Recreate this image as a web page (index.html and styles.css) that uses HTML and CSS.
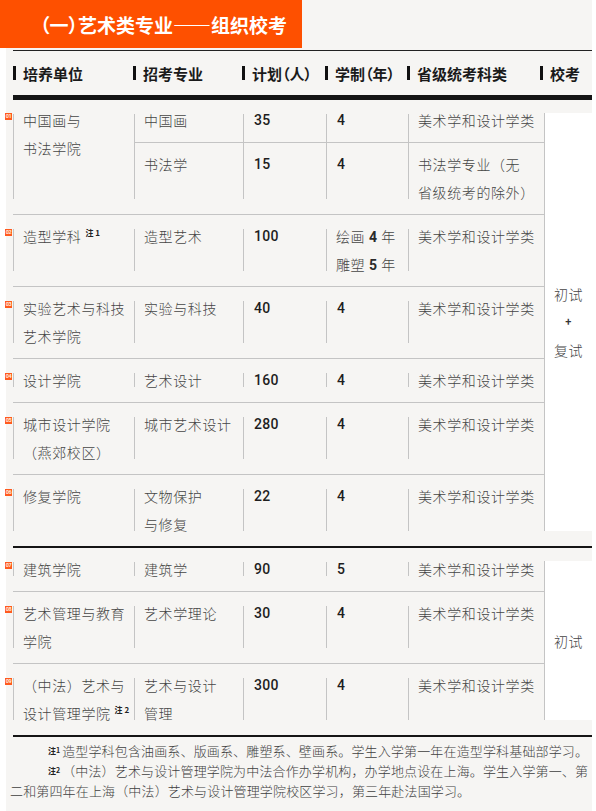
FILE: index.html
```html
<!DOCTYPE html>
<html lang="zh-CN">
<head>
<meta charset="utf-8">
<title>艺术类专业——组织校考</title>
<link rel="stylesheet" href="styles.css">
</head>
<body>
<div class="page">
  <div class="banner"><h1 class="title">（一）艺术类专业——组织校考</h1></div>
  <div class="content">
    <div class="thead">
      <div class="th">培养单位</div>
      <div class="th">招考专业</div>
      <div class="th">计划（人）</div>
      <div class="th">学制（年）</div>
      <div class="th">省级统考科类</div>
      <div class="th">校考</div>
    </div>

    <div class="group">
      <div class="rows">
        <div class="row row-split">
          <div class="cell unit"><span class="num">01</span>中国画与<br>书法学院</div>
          <div class="cell top">中国画</div>
          <div class="cell top n">35</div>
          <div class="cell top n">4</div>
          <div class="cell top">美术学和设计学类</div>
          <div class="cell bot">书法学</div>
          <div class="cell bot n">15</div>
          <div class="cell bot n">4</div>
          <div class="cell bot">书法学专业（无<br>省级统考的除外）</div>
        </div>
        <div class="row">
          <div class="cell unit"><span class="num">02</span>造型学科<sup class="mark">注 1</sup></div>
          <div class="cell">造型艺术</div>
          <div class="cell n">100</div>
          <div class="cell">绘画 <b class="d">4</b> 年<br>雕塑 <b class="d">5</b> 年</div>
          <div class="cell">美术学和设计学类</div>
        </div>
        <div class="row">
          <div class="cell unit"><span class="num">03</span>实验艺术与科技<br>艺术学院</div>
          <div class="cell">实验与科技</div>
          <div class="cell n">40</div>
          <div class="cell n">4</div>
          <div class="cell">美术学和设计学类</div>
        </div>
        <div class="row">
          <div class="cell unit"><span class="num">04</span>设计学院</div>
          <div class="cell">艺术设计</div>
          <div class="cell n">160</div>
          <div class="cell n">4</div>
          <div class="cell">美术学和设计学类</div>
        </div>
        <div class="row">
          <div class="cell unit"><span class="num">05</span>城市设计学院<br>（燕郊校区）</div>
          <div class="cell">城市艺术设计</div>
          <div class="cell n">280</div>
          <div class="cell n">4</div>
          <div class="cell">美术学和设计学类</div>
        </div>
        <div class="row">
          <div class="cell unit"><span class="num">06</span>修复学院</div>
          <div class="cell">文物保护<br>与修复</div>
          <div class="cell n">22</div>
          <div class="cell n">4</div>
          <div class="cell">美术学和设计学类</div>
        </div>
      </div>
      <div class="exam"><span>初试</span><span class="plus">+</span><span>复试</span></div>
    </div>

    <div class="group">
      <div class="rows">
        <div class="row">
          <div class="cell unit"><span class="num">07</span>建筑学院</div>
          <div class="cell">建筑学</div>
          <div class="cell n">90</div>
          <div class="cell n">5</div>
          <div class="cell">美术学和设计学类</div>
        </div>
        <div class="row">
          <div class="cell unit"><span class="num">08</span>艺术管理与教育<br>学院</div>
          <div class="cell">艺术学理论</div>
          <div class="cell n">30</div>
          <div class="cell n">4</div>
          <div class="cell">美术学和设计学类</div>
        </div>
        <div class="row">
          <div class="cell unit"><span class="num">09</span>（中法）艺术与<br>设计管理学院<sup class="mark">注 2</sup></div>
          <div class="cell">艺术与设计<br>管理</div>
          <div class="cell n">300</div>
          <div class="cell n">4</div>
          <div class="cell">美术学和设计学类</div>
        </div>
      </div>
      <div class="exam"><span>初试</span></div>
    </div>

    <div class="notes">
      <p class="note"><span class="fn">注<sup>1</sup></span>造型学科包含油画系、版画系、雕塑系、壁画系。学生入学第一年在造型学科基础部学习。</p>
      <p class="note"><span class="fn">注<sup>2</sup></span>（中法）艺术与设计管理学院为中法合作办学机构，办学地点设在上海。学生入学第一、第<br>二和第四年在上海（中法）艺术与设计管理学院校区学习，第三年赴法国学习。</p>
    </div>
  </div>
</div>
</body>
</html>
```
FILE: styles.css
```css
body {
  margin: 0;
  background: #ffffff;
  font-family: "Noto Sans CJK SC", "Noto Sans", sans-serif;
}

.page {
  margin-left: 6px;
  width: 586px;
  min-height: 811px;
  background: #f6f5f3;
}

.banner {
  margin-left: -6px;
  width: 302px;
  height: 48px;
  margin-bottom: 2px;
  background: #fe5000;
}

.title {
  margin: 0;
  padding: 1px 0 0 40px;
  font-size: 19px;
  line-height: 47px;
  font-weight: 700;
  color: #ffffff;
  font-feature-settings: "palt";
  white-space: nowrap;
}

.content {
  padding-left: 7px;
}

/* header */
.thead {
  display: grid;
  grid-template-columns: 120px 109px 83px 82px 133px 1fr;
  align-items: center;
  height: 44px;
  border-top: 1px solid #222222;
  border-bottom: 5px solid #151515;
}

.th {
  display: flex;
  align-items: center;
  gap: 7px;
  font-size: 15px;
  font-weight: 700;
  color: #1a1a1a;
  font-feature-settings: "palt";
  white-space: nowrap;
}

.th::before {
  content: "";
  width: 3px;
  height: 14px;
  background: #111111;
}

/* body groups */
.group {
  display: flex;
  border-bottom: 2px solid #151515;
}

.rows {
  width: 531px;
}

.row {
  display: grid;
  grid-template-columns: 121px 109px 83px 82px 136px;
  padding: 7px 0 8px;
  border-bottom: 1px solid #c4c4c4;
  font-size: 14px;
  font-weight: 300;
  line-height: 28px;
  letter-spacing: 0.6px;
  color: #454545;
  background-image:
    linear-gradient(#c4c4c4, #c4c4c4),
    linear-gradient(#c4c4c4, #c4c4c4),
    linear-gradient(#c4c4c4, #c4c4c4),
    linear-gradient(#c4c4c4, #c4c4c4),
    linear-gradient(#c4c4c4, #c4c4c4);
  background-repeat: no-repeat;
  background-size: 1px calc(100% - 29px);
  background-position: 0 14px, 121px 14px, 230px 14px, 313px 14px, 395px 14px;
}

.row:last-child {
  border-bottom: none;
}

.row-split {
  padding-top: 6px;
  grid-template-rows: auto auto;
}

.row-split .unit {
  grid-row: 1 / 3;
}

.cell {
  padding-left: 10px;
  white-space: nowrap;
}

.cell.top {
  padding-bottom: 8px;
  border-bottom: 1px solid #c4c4c4;
}

.cell.bot {
  padding-top: 7px;
}

.unit {
  position: relative;
}

.n {
  padding-left: 11px;
  font-family: Roboto, "Noto Sans", sans-serif;
  font-weight: 500;
  font-size: 14px;
  letter-spacing: 0.3px;
  color: #1e1e1e;
}

.d {
  font-family: Roboto, "Noto Sans", sans-serif;
  font-weight: 700;
  line-height: 1;
  color: #2a2a2a;
}

.num {
  position: absolute;
  left: -8px;
  top: 7px;
  width: 7px;
  height: 7px;
  background: #ff5a1e;
  color: #ffe9dc;
  font-family: Roboto, sans-serif;
  font-size: 5.5px;
  line-height: 7px;
  font-weight: 700;
  letter-spacing: -0.3px;
  text-align: center;
  overflow: hidden;
}

.mark {
  margin-left: 4px;
  font-size: 8px;
  line-height: 0;
  font-weight: 700;
  color: #222222;
  vertical-align: 6px;
  letter-spacing: 0;
}

.exam {
  flex: 1;
  margin: 13px 0 15px;
  background: #ffffff;
  border-left: 1px solid #c4c4c4;
  display: flex;
  flex-direction: column;
  justify-content: center;
  align-items: center;
  font-size: 14px;
  font-weight: 300;
  line-height: 28px;
  letter-spacing: 0.6px;
  color: #454545;
}

.plus {
  font-family: Roboto, sans-serif;
  font-weight: 500;
  font-size: 11px;
  color: #333333;
}

/* footnotes */
.notes {
  margin-left: -3px;
  padding-top: 4px;
}

.note {
  margin: 0;
  font-size: 13px;
  font-weight: 300;
  line-height: 20px;
  letter-spacing: 0.15px;
  color: #3f3f3f;
  text-indent: 38px;
  white-space: nowrap;
}

.fn {
  font-size: 8px;
  line-height: 0;
  font-weight: 700;
  color: #222222;
  vertical-align: 2px;
  margin-right: 2px;
  letter-spacing: 0;
}

.fn sup {
  font-size: 7px;
  line-height: 0;
  vertical-align: 1px;
}
```
